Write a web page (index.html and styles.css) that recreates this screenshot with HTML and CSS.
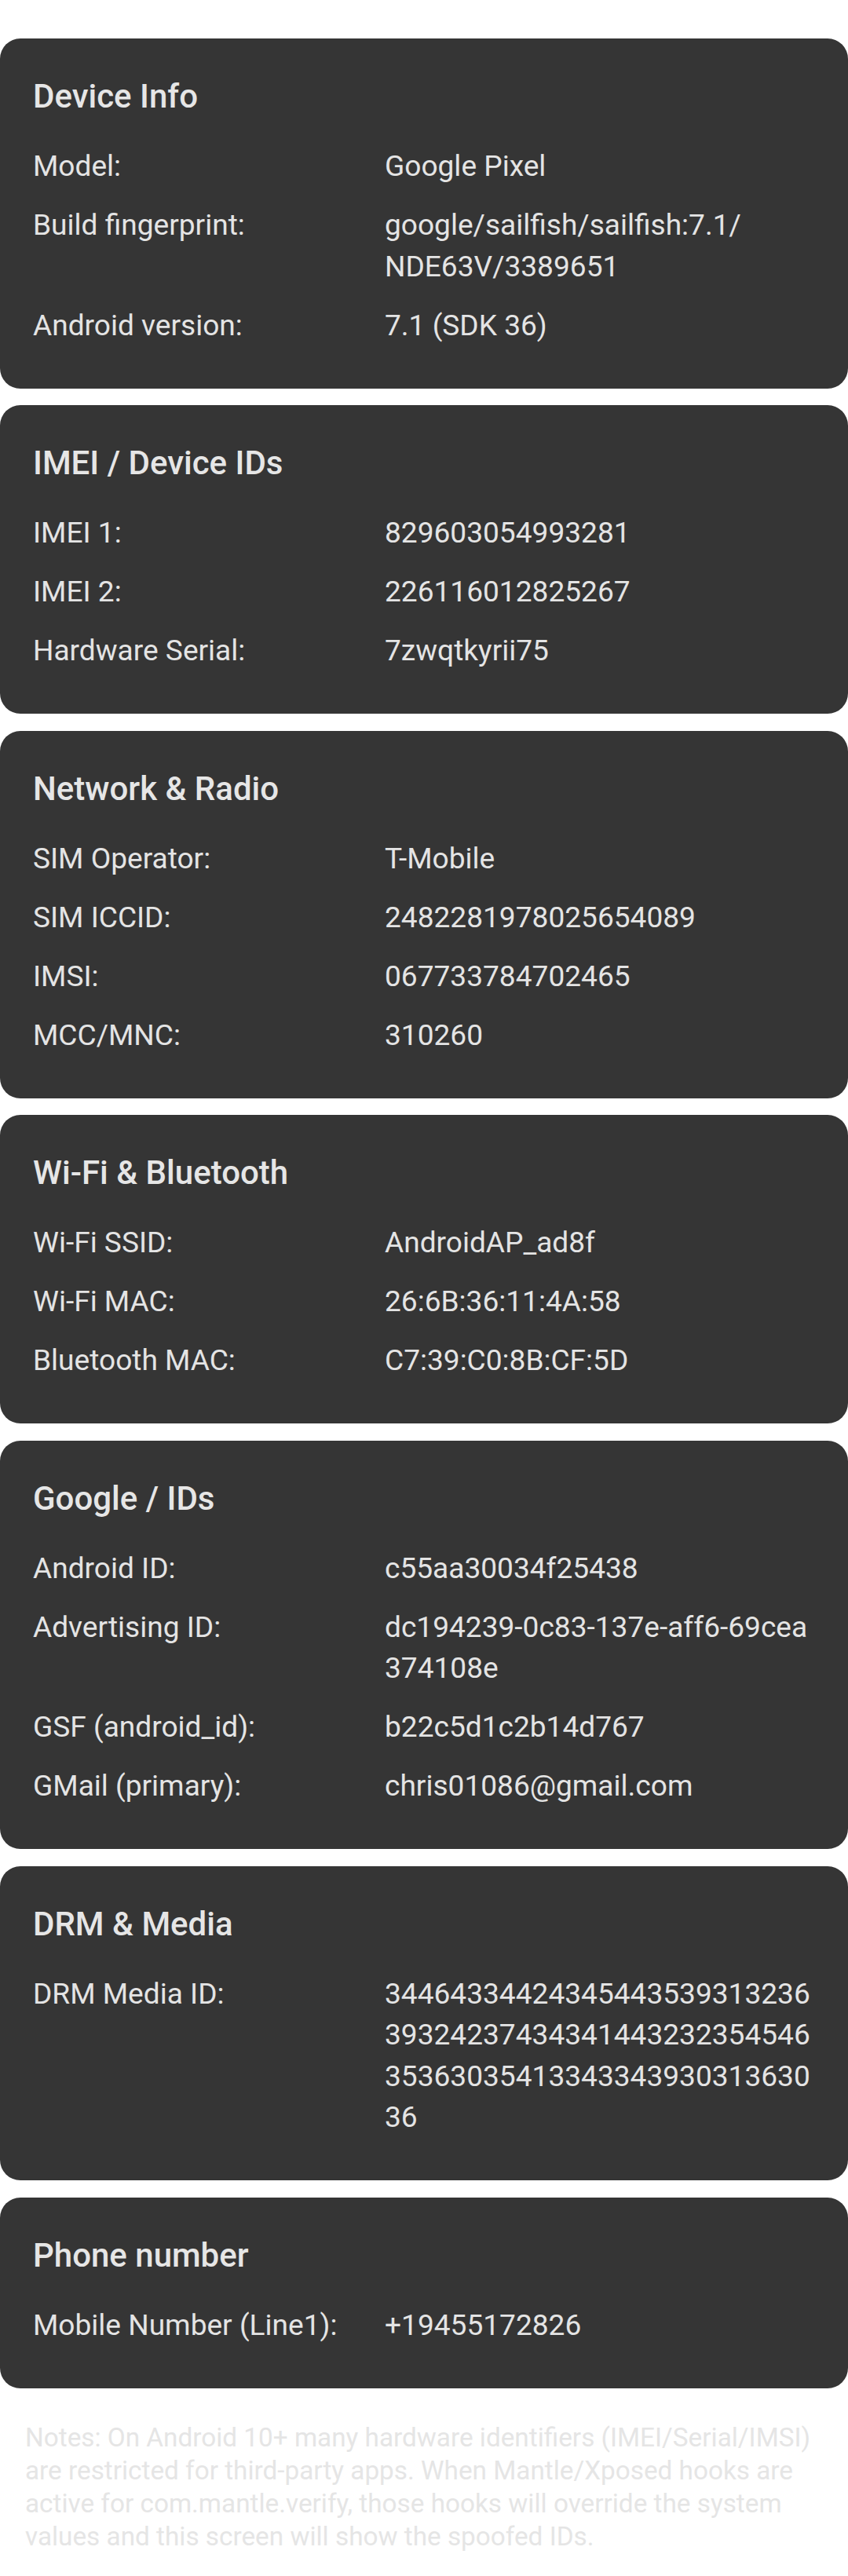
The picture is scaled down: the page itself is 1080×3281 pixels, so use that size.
FILE: index.html
```html
<!DOCTYPE html>
<html lang="en">
<head>
<meta charset="utf-8">
<title>Device IDs</title>
<link rel="stylesheet" href="styles.css">
</head>
<body>
<main class="page">
  <section class="card">
    <h2 class="card-title">Device Info</h2>
    <div class="row"><span class="label">Model:</span><span class="value">Google Pixel</span></div>
    <div class="row"><span class="label">Build fingerprint:</span><span class="value">google/sailfish/sailfish:7.1/<wbr>NDE63V/3389651</span></div>
    <div class="row"><span class="label">Android version:</span><span class="value">7.1 (SDK 36)</span></div>
  </section>

  <section class="card">
    <h2 class="card-title">IMEI / Device IDs</h2>
    <div class="row"><span class="label">IMEI 1:</span><span class="value">829603054993281</span></div>
    <div class="row"><span class="label">IMEI 2:</span><span class="value">226116012825267</span></div>
    <div class="row"><span class="label">Hardware Serial:</span><span class="value">7zwqtkyrii75</span></div>
  </section>

  <section class="card">
    <h2 class="card-title">Network &amp; Radio</h2>
    <div class="row"><span class="label">SIM Operator:</span><span class="value">T-Mobile</span></div>
    <div class="row"><span class="label">SIM ICCID:</span><span class="value">2482281978025654089</span></div>
    <div class="row"><span class="label">IMSI:</span><span class="value">067733784702465</span></div>
    <div class="row"><span class="label">MCC/MNC:</span><span class="value">310260</span></div>
  </section>

  <section class="card">
    <h2 class="card-title">Wi-Fi &amp; Bluetooth</h2>
    <div class="row"><span class="label">Wi-Fi SSID:</span><span class="value">AndroidAP_ad8f</span></div>
    <div class="row"><span class="label">Wi-Fi MAC:</span><span class="value">26:6B:36:11:4A:58</span></div>
    <div class="row"><span class="label">Bluetooth MAC:</span><span class="value">C7:39:C0:8B:CF:5D</span></div>
  </section>

  <section class="card">
    <h2 class="card-title">Google / IDs</h2>
    <div class="row"><span class="label">Android ID:</span><span class="value">c55aa30034f25438</span></div>
    <div class="row"><span class="label">Advertising ID:</span><span class="value value-break">dc194239-0c83-137e-aff6-69cea374108e</span></div>
    <div class="row"><span class="label">GSF (android_id):</span><span class="value">b22c5d1c2b14d767</span></div>
    <div class="row"><span class="label">GMail (primary):</span><span class="value">chris01086@gmail.com</span></div>
  </section>

  <section class="card">
    <h2 class="card-title">DRM &amp; Media</h2>
    <div class="row"><span class="label">DRM Media ID:</span><span class="value value-break">34464334424345443539313236393242374343414432323545463536303541334334393031363036</span></div>
  </section>

  <section class="card">
    <h2 class="card-title">Phone number</h2>
    <div class="row"><span class="label">Mobile Number (Line1):</span><span class="value">+19455172826</span></div>
  </section>

  <p class="notes">Notes: On Android 10+ many hardware identifiers (IMEI/Serial/IMSI) are restricted for third-party apps. When Mantle/Xposed hooks are active for com.mantle.verify, those hooks will override the system values and this screen will show the spoofed IDs.</p>
</main>
</body>
</html>
```

FILE: styles.css
```css
html, body {
  margin: 0;
  padding: 0;
  background: #ffffff;
}

body {
  font-family: Roboto, "Noto Sans", "Liberation Sans", sans-serif;
  color: #e4e4e4;
}

.page {
  display: flex;
  flex-direction: column;
  gap: 21.5px;
  padding: 49px 0 0;
}

.card {
  background: #353535;
  border-radius: 26px;
  padding: 49px 42px 42px;
}

.card-title {
  margin: 0 0 28px;
  font-size: 42px;
  font-weight: 500;
  line-height: 49px;
  color: #e6e6e6;
}

.row {
  display: grid;
  grid-template-columns: 448px 1fr;
  padding: 11.25px 0;
  font-size: 37.1px;
  line-height: 52.5px;
}

.label {
  color: #e4e4e4;
}

.value {
  color: #e4e4e4;
  min-width: 0;
}

.value-break {
  word-break: break-all;
}

.notes {
  margin: 21px 0 0;
  padding: 0 32px;
  font-size: 33.3px;
  line-height: 42px;
  color: #e5e5e5;
}
```
